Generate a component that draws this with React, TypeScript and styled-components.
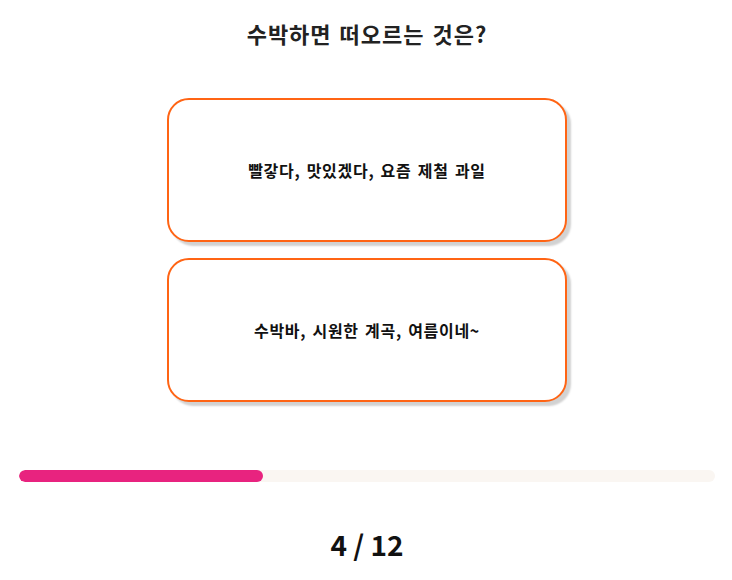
import React from "react";
import styled, { createGlobalStyle } from "styled-components";

const GlobalStyle = createGlobalStyle`
  html, body {
    margin: 0;
    padding: 0;
    background: #ffffff;
    font-family: "Noto Sans CJK KR", "Noto Sans", sans-serif;
    color: #111111;
  }
`;

const Page = styled.div`
  display: flex;
  flex-direction: column;
  align-items: center;
  padding: 18px 17px 0 19px;
`;

const Title = styled.h1`
  margin: 0;
  font-size: 22px;
  line-height: 30px;
  font-weight: 700;
  letter-spacing: 1px;
  word-spacing: 2px;
  color: #222222;
`;

const Options = styled.div`
  display: flex;
  flex-direction: column;
  gap: 16px;
  margin-top: 50px;
`;

const OptionCard = styled.button`
  display: flex;
  align-items: center;
  justify-content: center;
  width: 400px;
  height: 144px;
  box-sizing: border-box;
  border: 2px solid #ff6414;
  border-radius: 22px;
  background: #ffffff;
  box-shadow: 4px 4px 2px #d2d2d2;
  font-family: inherit;
  font-size: 16px;
  font-weight: 700;
  letter-spacing: 0.7px;
  word-spacing: 2px;
  color: #111111;
  cursor: pointer;
  padding: 0;
`;

const Track = styled.div`
  align-self: stretch;
  height: 12px;
  margin-top: 68px;
  border-radius: 6px;
  background: #faf6f2;
  overflow: hidden;
`;

const Fill = styled.div`
  height: 100%;
  border-radius: 6px;
  background: #e8237f;
`;

const Counter = styled.div`
  margin-top: 44px;
  font-size: 28px;
  line-height: 36px;
  font-weight: 700;
  color: #111111;
`;

const options = ["빨갛다, 맛있겠다, 요즘 제철 과일", "수박바, 시원한 계곡, 여름이네~"];

export default function App() {
  const current = 4;
  const total = 12;
  const progress = 35;
  return (
    <>
      <GlobalStyle />
      <Page>
        <Title>수박하면 떠오르는 것은?</Title>
        <Options>
          {options.map((o) => (
            <OptionCard key={o}>{o}</OptionCard>
          ))}
        </Options>
        <Track>
          <Fill style={{ width: `${progress}%` }} />
        </Track>
        <Counter>
          {current} / {total}
        </Counter>
      </Page>
    </>
  );
}
